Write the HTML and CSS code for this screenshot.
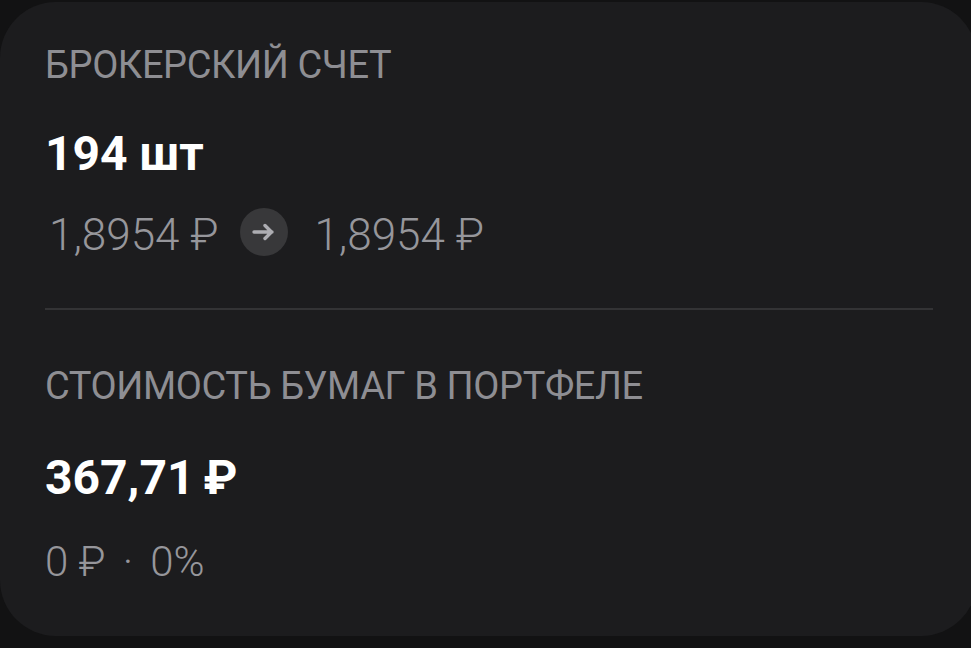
FILE: index.html
```html
<!DOCTYPE html>
<html lang="ru">
<head>
    <meta charset="UTF-8">
    <title>Брокерский счет</title>
    <link rel="stylesheet" href="styles.css">
</head>
<body>
    <div class="card">
        <div class="block">
            <p class="label">БРОКЕРСКИЙ СЧЕТ</p>
            <p class="amount amount-qty">194 шт</p>
            <div class="price-row">
                <span class="price">1,8954 ₽</span>
                <span class="arrow">
                    <svg width="26" height="26" viewBox="0 0 26 26" fill="none">
                        <path d="M3 13h18M14 6.5l6.5 6.5-6.5 6.5" stroke="#adadb2" stroke-width="3.4" stroke-linecap="round" stroke-linejoin="round"/>
                    </svg>
                </span>
                <span class="price">1,8954 ₽</span>
            </div>
        </div>

        <div class="divider"></div>

        <div class="block">
            <p class="label">СТОИМОСТЬ БУМАГ В ПОРТФЕЛЕ</p>
            <p class="amount amount-sum">367,71 ₽</p>
            <p class="change">0 ₽ <span class="dot">·</span> 0%</p>
        </div>
    </div>
</body>
</html>
```

FILE: styles.css
```css
html, body {
    margin: 0;
    padding: 0;
}

body {
    background: #121213;
    font-family: Roboto, "Noto Sans", sans-serif;
    overflow: hidden;
}

p {
    margin: 0;
}

.card {
    margin: 2px -6px 0 0;
    height: 634px;
    box-sizing: border-box;
    padding: 39px 44px 0 45px;
    background: #1c1c1e;
    border-radius: 56px;
}

.label {
    font-size: 38px;
    line-height: 48px;
    color: #8e8e93;
    letter-spacing: -0.4px;
}

.amount {
    font-size: 48px;
    line-height: 56px;
    font-weight: 700;
    color: #fff;
}

.amount-qty {
    margin-top: 37px;
}

.amount-sum {
    margin-top: 40px;
    word-spacing: -3px;
}

.price-row {
    display: flex;
    align-items: center;
    margin-top: 29px;
    height: 48px;
}

.price {
    font-size: 44px;
    font-weight: 300;
    color: #96969b;
    padding-left: 4px;
}

.arrow {
    width: 48px;
    height: 48px;
    margin: -6px 22px 0 22px;
    border-radius: 50%;
    background: #38383a;
    display: flex;
    align-items: center;
    justify-content: center;
}

.divider {
    height: 2px;
    background: #333335;
    margin: 49px 0 52px;
}

.change {
    margin-top: 32px;
    font-size: 42px;
    line-height: 48px;
    font-weight: 300;
    color: #96969b;
}

.dot {
    margin: 0 7px;
}
```
